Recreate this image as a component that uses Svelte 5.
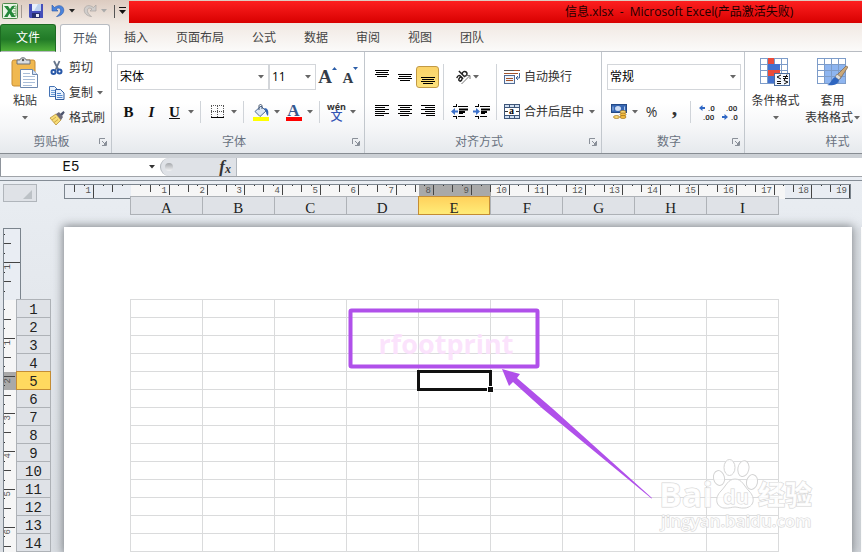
<script>
  const tabs = ['开始', '插入', '页面布局', '公式', '数据', '审阅', '视图', '团队'];
  const cols = ['A', 'B', 'C', 'D', 'E', 'F', 'G', 'H', 'I'];
  const rows = Array.from({ length: 14 }, (_, i) => i + 1);
  let active = $state('开始');
  let fontName = $state('宋体');
  let fontSize = $state('11');
  let format = $state('常规');
  let formula = $state('');
  let cell = $state('E5');

  // one ruler centimetre in pixels
  const CM = 37.8;
  const quarter = (from, to) => {
    const out = [];
    for (let q = from; q <= to; q++) out.push(q);
    return out;
  };
  const hTicks = quarter(-6, 76);
  const vTicks = quarter(-7, 26);
</script>

{#snippet down(color = '#666')}
  <svg class="down" width="6" height="4" viewBox="0 0 6 4" aria-hidden="true"><path d="M0 0h6L3 3.6z" fill={color} /></svg>
{/snippet}

{#snippet drop(label)}
  <button class="drop" aria-label={label}>{@render down()}</button>
{/snippet}

{#snippet lines(list)}
  <svg width="16" height="16" viewBox="0 0 16 16" aria-hidden="true">
    {#each list as [x, y, w]}<rect {x} {y} width={w} height="1" fill="#000" />{/each}
  </svg>
{/snippet}

{#snippet caption(text, launcher)}
  <div class="caption">
    <span>{text}</span>
    {#if launcher}
      <button aria-label={text + '设置'}>
        <svg width="8" height="8" viewBox="0 0 8 8" fill="none" stroke="#8a9099"><path d="M.5 6V.5H6M3 3l3 3M7.5 3v4.500H3M5 6.500h2M6.500 4v2" /></svg>
      </button>
    {/if}
  </div>
{/snippet}

<div class="app">
  <header class="title">
    <div class="quick">
      <svg width="17" height="17" viewBox="0 0 17 17" aria-hidden="true">
        <rect x=".5" y=".5" width="15" height="15" rx="1" fill="#e9f5e6" stroke="#4d8a4c" />
        <path d="M11 3h3v10h-3M11 5.500h3M11 8h3M11 10.500h3" stroke="#75ad72" fill="none" />
        <path d="M2 3h4l2 3 2-3h3L9.500 8l4 6H9.500L7.500 10.500 5.500 14H2l4-6z" fill="#24873a" />
      </svg>
      <i class="bar"></i>
      <button aria-label="保存" class="save">
        <svg width="14" height="14" viewBox="0 0 14 14"><path d="M0 0h14v14H1l-1-1z" fill="#454fba" /><rect x="3" width="9" height="7" fill="#e8f0fb" /><path d="M9 0h3v7H5z" fill="#bdd2ef" /><rect x="3" y="9" width="8" height="5" fill="#263070" /><rect x="7" y="10" width="3" height="3" fill="#e8ecf8" /></svg>
      </button>
      <button aria-label="撤消" class="undo">
        <svg width="14" height="14" viewBox="0 0 14 14"><path d="M1 1v6h6L5 5c3-2 5-.5 4.500 2.500C9 10 7 11.500 5.500 12.500 10 12 12.800 9.500 12.800 6 12.500 1 7 .5 3.500 3.500z" fill="#4a83dc" stroke="#2a58a8" stroke-width=".6" /></svg>
      </button>
      {@render down('#222')}
      <button aria-label="恢复" class="redo">
        <svg width="14" height="14" viewBox="0 0 14 14"><path d="M13 1v6H7l2-2c-3-2-5-.5-4.500 2.500C5 10 7 11.500 8.500 12.500 4 12 1.200 9.500 1.200 6 1.500 1 7 .5 10.500 3.500z" fill="#d0cdcb" stroke="#a9a5a2" stroke-width=".7" /></svg>
      </button>
      {@render down('#aaa')}
      <i class="bar dark"></i>
      <button aria-label="自定义快速访问工具栏" class="custom">
        <svg width="7" height="8" viewBox="0 0 7 8"><path d="M0 .5h7" stroke="#111" /><path d="M0 3h7L3.500 7z" fill="#111" /></svg>
      </button>
    </div>
    <h1>信息.xlsx&nbsp; -&nbsp; Microsoft Excel(产品激活失败)</h1>
  </header>

  <nav class="tabs">
    <button class="file">文件</button>
    {#each tabs as t}
      <button class:on={t === active} onclick={() => (active = t)}>{t}</button>
    {/each}
  </nav>

  <section class="ribbon">
    <div class="group clip">
      <div class="body">
        <button class="paste">
          <svg width="28" height="32" viewBox="0 0 28 32">
            <rect x="1" y="3" width="23" height="26" rx="2" fill="#f0b850" stroke="#c78d32" />
            <path d="M6 3h3c0-3 6-3 6 0h4v4H6z" fill="#d8dde2" stroke="#6d7177" /><circle cx="12" cy="3" r="1.200" fill="#555" />
            <path d="M9.500 12.500h12l5 5v13h-17z" fill="#fff" stroke="#6d87ad" /><path d="M21.500 12.500v5h5" fill="#d5e2f4" stroke="#6d87ad" />
            <path d="M12 16.500h7M12 19.500h12M12 22.500h12M12 25.500h12M12 28.500h9" stroke="#a9bdd8" />
          </svg>
          <span>粘贴</span>
          {@render down()}
        </button>
        <div class="stack">
          <button>
            <svg width="16" height="16" viewBox="0 0 16 16"><path d="M5 1l4.500 9M10.500 1L6.500 10" stroke="#66758c" stroke-width="1.800" /><circle cx="4.500" cy="12" r="2" fill="none" stroke="#2858a8" stroke-width="2" /><circle cx="10.500" cy="11.500" r="2" fill="none" stroke="#2858a8" stroke-width="2" /></svg>
            剪切
          </button>
          <button>
            <svg width="16" height="16" viewBox="0 0 16 16"><path d="M.5 1.500h5l3 3v7h-8z" fill="#e9f2fd" stroke="#4473b5" /><path d="M2 5.500h4M2 7.500h4M2 9.500h4" stroke="#6b9bd6" /><path d="M6.500 4.500h5l3.500 3.500v6.500H6.500z" fill="#e9f2fd" stroke="#315da0" /><path d="M8 8.500h4M8 10.500h5.500M8 12.500h5.500" stroke="#5488ce" /></svg>
            复制 {@render down()}
          </button>
          <button>
            <svg width="16" height="16" viewBox="0 0 16 16"><path d="M1 8l6-4 5 6-5 5z" fill="#f7dd78" stroke="#b6913b" stroke-width=".8" /><path d="M3 10l4-3M5 12.500l4-3" stroke="#d1a846" /><path d="M7 4l3-2 4 5-2 3z" fill="#6d6a78" /><path d="M11 4l3.500-3 1.200 1.500L13 6z" fill="#4b536d" /></svg>
            格式刷
          </button>
        </div>
      </div>
      {@render caption('剪贴板', true)}
    </div>

    <div class="group font">
      <div class="body rows">
        <div class="row">
          <label class="combo name"><select bind:value={fontName} aria-label="字体"><option>宋体</option><option>黑体</option></select>{@render down()}</label>
          <label class="combo size"><select bind:value={fontSize} aria-label="字号"><option>11</option><option>12</option></select>{@render down()}</label>
          <button class="tool grow" aria-label="增大字号"><b>A</b><svg width="5" height="3" viewBox="0 0 5 3"><path d="M0 3h5L2.500 0z" fill="#2b5da8" /></svg></button>
          <button class="tool shrink" aria-label="减小字号"><b>A</b><svg width="5" height="3" viewBox="0 0 5 3"><path d="M0 0h5L2.500 3z" fill="#2b5da8" /></svg></button>
        </div>
        <div class="row">
          <button class="tool serif"><b>B</b></button>
          <button class="tool serif"><b><em>I</em></b></button>
          <button class="tool serif"><b><u>U</u></b></button>
          {@render drop('下划线')}
          <i class="sep"></i>
          <button class="tool" aria-label="边框">
            <svg width="14" height="14" viewBox="0 0 14 14"><path d="M.5 1v11M6.500 1v11M12.500 1v11M0 .5h13M0 6.500h13" stroke="#555" stroke-dasharray="1 1" fill="none" /><path d="M0 12.500h13" stroke="#000" /></svg>
          </button>
          {@render drop('边框')}
          <i class="sep"></i>
          <button class="tool" aria-label="填充颜色">
            <svg width="16" height="17" viewBox="0 0 16 17"><path d="M2 7.500L8 2l5 5-6 5.500z" fill="#dce7f5" stroke="#4d6b97" /><path d="M6 6V2c0-2 3-2 3 0v3" fill="none" stroke="#46566e" /><path d="M11 4c4 0 5 3 4 8-1.500-1-2-3-2-5z" fill="#2f62b3" /><rect y="13" width="16" height="4" fill="#ff0" /></svg>
          </button>
          {@render drop('填充颜色')}
          <button class="tool color" aria-label="字体颜色"><b>A</b><span></span></button>
          {@render drop('字体颜色')}
          <i class="sep"></i>
          <button class="tool wen"><span>wén</span><span class="zi">文</span></button>
          {@render drop('拼音')}
        </div>
      </div>
      {@render caption('字体', true)}
    </div>

    <div class="group align">
      <div class="body cols">
        <div class="rows three">
          <div class="row">
            <button class="tool" aria-label="顶端对齐">{@render lines([[1, 1, 14], [2, 3, 12], [1, 5, 14], [3, 7, 10]])}</button>
            <button class="tool" aria-label="垂直居中">{@render lines([[1, 5, 14], [2, 7, 12], [1, 9, 14], [3, 11, 10]])}</button>
            <button class="tool pressed" aria-label="底端对齐">{@render lines([[1, 8, 14], [2, 10, 12], [1, 12, 14], [3, 14, 10]])}</button>
          </div>
          <div class="row">
            <button class="tool" aria-label="左对齐">{@render lines([[1, 1, 14], [1, 3, 10], [1, 5, 14], [1, 7, 10], [1, 9, 14], [1, 11, 9]])}</button>
            <button class="tool" aria-label="居中">{@render lines([[1, 1, 14], [3, 3, 10], [1, 5, 14], [3, 7, 10], [1, 9, 14], [3, 11, 9]])}</button>
            <button class="tool" aria-label="右对齐">{@render lines([[1, 1, 14], [5, 3, 10], [1, 5, 14], [5, 7, 10], [1, 9, 14], [6, 11, 9]])}</button>
          </div>
        </div>
        <i class="sep tall"></i>
        <div class="rows">
          <div class="row">
            <button class="tool wide" aria-label="方向">
              <svg width="17" height="16" viewBox="0 0 17 16" fill="none"><g transform="rotate(-45 6 7)" stroke="#222" stroke-width="1.500"><path d="M1.500 5.500c3-1.500 4 0 4 1.500v3.500M5.500 7.500c-3-.5-4.500.5-4 2s3 1 4-.5M8 2v8.500M8 6.500c2-1.800 4.500-.5 4.500 1.500S10 11.500 8 9.500" /></g><path d="M6.500 15l8-8M11.500 6.500h3.500v3.500" stroke="#777" /></svg>
              {@render down()}
            </button>
          </div>
          <div class="row">
            <button class="tool" aria-label="减少缩进量">
              <svg width="17" height="16" viewBox="0 0 17 16"><path d="M2 2.500h4M7 2.500h10M2 12.500h4M7 12.500h7M8 9.500h4M5.500 0v3M5.500 13v2" stroke="#000" /><path d="M8 5.500h9M8 8h6" stroke="#000" stroke-width="2" /><path d="M0 7.500L4 4v2.500h3v2H4V11z" fill="#3b70c9" /></svg>
            </button>
            <button class="tool" aria-label="增加缩进量">
              <svg width="17" height="16" viewBox="0 0 17 16"><path d="M2 2.500h4M7 2.500h10M2 12.500h4M7 12.500h7M8 9.500h4M5.500 0v3M5.500 13v2" stroke="#000" /><path d="M8 5.500h9M8 8h6" stroke="#000" stroke-width="2" /><path d="M7 7.500L3 4v2.500H0v2h3V11z" fill="#3b70c9" /></svg>
            </button>
          </div>
        </div>
        <i class="sep tall"></i>
        <div class="rows">
          <div class="row">
            <button class="text">
              <svg width="17" height="16" viewBox="0 0 17 16"><path d="M0 1.500h16M0 4.500h14" stroke="#a2542b" /><path d="M0 1.500h10" stroke="#555" /><rect x=".5" y="6.500" width="10" height="8" fill="#eef3fa" stroke="#516b94" /><path d="M2 9.500h7M2 11.500h7" stroke="#a2542b" /><path d="M15.500 4v5h-3M14 7l-2 2 2 2" fill="none" stroke="#3d6599" /></svg>
              自动换行
            </button>
          </div>
          <div class="row">
            <button class="text">
              <svg width="17" height="16" viewBox="0 0 17 16"><rect x=".5" y=".5" width="15" height="14" fill="#cfdef1" stroke="#3d5578" /><path d="M0 3.500h16M0 11.500h16M5.500 0v3M10.500 0v3M5.500 12v3M10.500 12v3" stroke="#3d5578" /><rect x="1" y="4" width="14" height="7" fill="#fff" /><path d="M1 7.500h3M12 7.500h3" stroke="#333" /><text x="5" y="10" font-family="Liberation Serif" font-weight="700" font-size="10">a</text></svg>
              合并后居中 {@render down()}
            </button>
          </div>
        </div>
      </div>
      {@render caption('对齐方式', true)}
    </div>

    <div class="group number">
      <div class="body rows">
        <div class="row">
          <label class="combo fmt"><select bind:value={format} aria-label="数字格式"><option>常规</option><option>数值</option></select>{@render down()}</label>
        </div>
        <div class="row">
          <button class="tool" aria-label="会计数字格式">
            <svg width="16" height="16" viewBox="0 0 16 16"><rect x=".5" y=".5" width="15" height="8" fill="#3767b3" stroke="#244a87" /><ellipse cx="7" cy="4.500" rx="3" ry="2.500" fill="#cdddf4" /><path d="M2 2.500v4M13.500 2.500v4" stroke="#a9c4ea" /><ellipse cx="12" cy="8" rx="3" ry="1.500" fill="#fad874" stroke="#a17019" stroke-width=".7" /><ellipse cx="12" cy="10.500" rx="3" ry="1.500" fill="#f5bd3f" stroke="#a17019" stroke-width=".7" /><ellipse cx="12" cy="13" rx="3" ry="1.500" fill="#f5bd3f" stroke="#a17019" stroke-width=".7" /><ellipse cx="5.500" cy="13" rx="3" ry="1.500" fill="#fad874" stroke="#a17019" stroke-width=".7" /></svg>
          </button>
          {@render drop('会计数字格式')}
          <button class="tool pct">%</button>
          <button class="tool comma">,</button>
          <i class="sep"></i>
          <button class="tool dec" aria-label="增加小数位数">
            <svg width="17" height="18" viewBox="0 0 17 18" font-family="Roboto" font-size="8" font-weight="500" fill="#222"><path d="M0 5l3.500-3v2H6v2H3.500v2z" fill="#2f67c4" /><text x="9" y="8">.0</text><text x="4" y="17">.00</text></svg>
          </button>
          <button class="tool dec" aria-label="减少小数位数">
            <svg width="17" height="18" viewBox="0 0 17 18" font-family="Roboto" font-size="8" font-weight="500" fill="#222"><path d="M6 14l-3.500-3v2H0v2h2.500v2z" fill="#2f67c4" /><text x="4" y="8">.00</text><text x="9" y="17">.0</text></svg>
          </button>
        </div>
      </div>
      {@render caption('数字', true)}
    </div>

    <div class="group style">
      <div class="body">
        <button class="large">
          <svg width="31" height="30" viewBox="0 0 31 30"><rect x=".5" y=".5" width="27" height="25" fill="#fff" stroke="#7d9cc9" /><path d="M0 6.500h28M0 12.500h28M0 18.500h28M7.500 0v26M14.500 0v26M21.500 0v26" stroke="#7d9cc9" /><path d="M8 0h6v6H8zM8 12h12v6H8z" fill="#ea4b3a" /><path d="M8 6h12v6H8zM8 18h6v7H8z" fill="#4372cf" /><rect x="14.500" y="15.500" width="15" height="12" fill="#f4f8fe" stroke="#4b6c9c" /><path d="M21 17l-4 2 4 2M17 23.500h4M17 25.500h4M23 18.500h5M23 20.500h5M27 16.500l-3 6M24 22.500l4 1.500-4 2" stroke="#111" fill="none" /></svg>
          <span>条件格式</span>
          {@render down()}
        </button>
        <button class="large">
          <svg width="31" height="30" viewBox="0 0 31 30"><rect x=".5" y=".5" width="28" height="25" fill="#fff" stroke="#7d9cc9" /><rect x="8" y="7" width="20" height="18" fill="#8eb5f0" /><path d="M0 6.500h29M0 12.500h29M0 18.500h29M7.500 0v26M14.500 0v26M21.500 0v26" stroke="#7d9cc9" /><path d="M29 8l2 1-8 12-4-3z" fill="#caa879" stroke="#70583c" stroke-width=".6" /><path d="M20 16l4 3-2 3-4-3z" fill="#ddd" stroke="#666" stroke-width=".6" /><path d="M18 19l4 3c-1 5-7 6-12 5 4-1 4-6 8-8z" fill="#2e66c0" /></svg>
          <span>套用</span>
          <span class="with">表格格式 {@render down()}</span>
        </button>
      </div>
      {@render caption('样式', false)}
    </div>
  </section>

  <section class="formula">
    <label class="namebox"><input bind:value={cell} aria-label="名称框" />{@render down('#333')}</label>
    <div class="fx"><span class="knob"></span><button aria-label="插入函数"><i>f</i><i class="x">x</i></button></div>
    <input class="entry" bind:value={formula} aria-label="编辑栏" />
  </section>

  <main class="work">
    <div class="corner"><button aria-label="全选"><svg width="9" height="9" viewBox="0 0 9 9"><path d="M9 0v9H0z" fill="#bcc1c6" /></svg></button></div>

    <div class="top">
      <svg class="hruler" width="788" height="15" viewBox="64 184 788 15" aria-hidden="true">
        <rect x="64.500" y="184.500" width="786" height="14" fill="#e9edf3" stroke="#7b848d" />
        <rect x="131" y="185" width="654" height="14" fill="#f6f6f6" />
        <rect x="419" y="185" width="72" height="14" fill="#a9a9a9" />
        {#each hTicks as q}
          {@const x = Math.round(131 + (q * CM) / 4)}
          {#if q % 4 === 0}
            {#if q !== 0}
              <rect {x} y="185" width="1" height={q < 0 || q > 70 ? 13 : 10} fill="#444" />
              <text x={x - 2} y="193" text-anchor="end">{Math.abs(q / 4)}</text>
            {/if}
          {:else if q % 2 === 0}
            <rect {x} y="185" width="1" height="7" fill="#444" />
          {:else}
            <rect {x} y="185" width="1" height="1" fill="#333" />
          {/if}
        {/each}
      </svg>
      <div class="heads">
        {#each cols as c}<div class:sel={c === 'E'}>{c}</div>{/each}
      </div>
    </div>

    <div class="side">
      <svg class="vruler" width="13" height="325" viewBox="3 228 13 325" aria-hidden="true">
        <rect x="3.500" y="228.500" width="17" height="340" fill="#e9edf3" stroke="#7b848d" />
        <rect x="4" y="300" width="17" height="260" fill="#f6f6f6" />
        <rect x="4" y="372" width="17" height="18" fill="#a9a9a9" />
        {#each vTicks as q}
          {@const y = Math.round(300 + (q * CM) / 4)}
          {#if q % 4 === 0}
            {#if q !== 0}
              <rect x="4" {y} width={q < 0 ? 16 : 11} height="1" fill="#444" />
              <text transform="translate(10 {y + 2}) rotate(-90)" text-anchor="end">{Math.abs(q / 4)}</text>
            {/if}
          {:else if q % 2 === 0}
            <rect x="4" {y} width="7" height="1" fill="#444" />
          {:else}
            <rect x="4" {y} width="1" height="1" fill="#333" />
          {/if}
        {/each}
      </svg>
      <div class="nums">
        {#each rows as r}<div class:sel={r === 5}>{r}</div>{/each}
      </div>
    </div>

    <div class="pages">
      <div class="page">
        <table>
          <tbody>
            {#each rows as r}
              <tr>{#each cols as c}<td>{#if c === 'E' && r === 5}<span class="cursor"></span>{/if}</td>{/each}</tr>
            {/each}
          </tbody>
        </table>
        <svg class="marks" width="788" height="325" viewBox="64 227 788 325">
          <text x="446" y="354" text-anchor="middle" font-family="Open Sans" font-weight="700" font-size="27" fill="#fbdffc" fill-opacity=".9">rfootprint</text>
          <rect x="350.500" y="310.500" width="187" height="56" rx="1" fill="none" stroke="#b050ea" stroke-width="4" />
          <path d="M502 369l18 5-3 4 36 31 99 89-.5.5L543 409l-30-27-4 4z" fill="#b050ea" />
          <g class="mark" fill="#fff" fill-opacity=".8" stroke="#d4d4d4" stroke-width="1">
            <ellipse cx="719" cy="478" rx="5.500" ry="7.500" transform="rotate(-12 719 478)" />
            <ellipse cx="729.500" cy="467.500" rx="5.500" ry="8" />
            <ellipse cx="743.500" cy="468.500" rx="5.500" ry="8" transform="rotate(12 743 468)" />
            <ellipse cx="752" cy="482" rx="5.500" ry="7.500" transform="rotate(12 752 482)" />
            <path d="M735 479c7 0 9 7 14 12 7 7 5 16-4 17-5 .5-7-1-10-1s-6 1.500-11 1c-8-1-10-10-3-17 5-5 7-12 14-12z" />
            <text x="659" y="507" font-family="Open Sans" font-weight="700" font-size="34">Bai</text>
            <text x="723" y="504" font-family="Open Sans" font-weight="700" font-size="20">du</text>
            <text x="758" y="505" font-family="Noto Sans CJK SC" font-weight="900" font-size="27">经验</text>
            <text x="661" y="527" font-family="Open Sans" font-weight="600" font-size="17">jingyan.baidu.com</text>
          </g>
        </svg>
      </div>
      <div class="next"></div>
    </div>
  </main>
</div>

<style>
  :global(body) { margin: 0; }
  .app {
    height: 100vh;
    overflow: hidden;
    display: flex;
    flex-direction: column;
    font: 12px/16px 'Open Sans', 'Noto Sans CJK SC', sans-serif;
    color: #333;
    background: linear-gradient(#dccbc0, #f1e9e3 24px, #fbfaf9 50px);
  }
  svg { display: block; flex: none; }
  button {
    border: 0;
    padding: 0;
    margin: 0;
    background: none;
    font: inherit;
    color: inherit;
    display: flex;
    align-items: center;
    justify-content: center;
    flex: none;
    white-space: nowrap;
  }
  input, select { font: inherit; color: inherit; border: 0; padding: 0; margin: 0; outline: 0; background: transparent; min-width: 0; }

  .title { display: flex; height: 24px; flex: none; }
  .quick { width: 127px; padding-left: 2px; display: flex; align-items: center; flex: none; padding-bottom: 2px; height: 22px; }
  .bar { width: 1px; height: 13px; background: #a49a94; margin: 0 7px 0 2px; }
  .bar.dark { background: #555; margin: 0 4px 0 7px; }
  .undo { margin: 0 4px 0 8px; }
  .redo { margin: 0 4px 0 8px; }
  h1 {
    margin: 1px 0 0;
    flex: 1;
    height: 22px;
    padding-left: 436px;
    background: linear-gradient(#fd2020, #d80000);
    color: #200;
    font: inherit;
    line-height: 22px;
    white-space: nowrap;
    overflow: hidden;
  }

  .tabs { display: flex; height: 28px; flex: none; }
  .tabs button { padding: 0 14px; color: #444; border: 1px solid transparent; border-width: 0 0 1px; border-bottom-color: #b8bcc2; }
  .tabs::after { content: ''; flex: 1; border-bottom: 1px solid #b8bcc2; }
  .tabs .file { width: 56px; margin-right: 4px; border: 1px solid #1d6b22; border-bottom-color: #b8bcc2; border-radius: 3px 3px 0 0; background: linear-gradient(#35913a, #217a27 55%, #4fb039); color: #fff; }
  .tabs .on { padding: 0 12px; border: 1px solid #b8bcc2; border-bottom: 0; border-radius: 3px 3px 0 0; background: #fff; color: #4a5360; }

  .ribbon { display: flex; height: 101px; flex: none; background: linear-gradient(#fff 50%, #f5f6f8 75%, #e6e9ed); overflow: hidden; border-bottom: 1px solid #878c92; }
  .group { flex: none; display: flex; flex-direction: column; border-right: 1px solid #c2c7cd; box-sizing: border-box; }
  .clip { width: 112px; }
  .font { width: 253px; }
  .align { width: 237px; }
  .number { width: 143px; }
  .style { width: 190px; }
  .body { height: 80px; display: flex; box-sizing: border-box; padding-left: 5px; }
  .style .body { padding-left: 2px; }
  .cols { align-items: flex-start; }
  .rows { display: flex; flex-direction: column; gap: 10px; padding-top: 12px; }
  .body.rows { padding-left: 5px; }
  .row { display: flex; align-items: center; height: 26px; }
  .body.rows .row + .row, .cols .row + .row { height: 24px; }
  .caption { display: flex; height: 20px; align-items: center; color: #69727f; padding-right: 4px; }
  .caption span { flex: 1; text-align: center; padding-left: 4px; }
  .style .caption span { padding-left: 0; }

  .paste { flex-direction: column; width: 40px; gap: 4px; justify-content: flex-start; padding-top: 5px; }
  .paste :global(.down) { margin-top: 3px; }
  .stack { display: flex; flex-direction: column; padding: 3px 0 0 4px; }
  .stack button { height: 25px; gap: 4px; justify-content: flex-start; }
  .stack :global(.down) { margin-left: 0; }

  .combo { display: flex; align-items: center; box-sizing: border-box; height: 26px; border: 1px solid #d3d6da; background: #fff; padding: 0 4px 0 2px; color: #000; flex: none; }
  .combo select { flex: 1; appearance: none; height: 22px; }
  .name { width: 152px; }
  .size { width: 47px; }
  .fmt { width: 134px; }
  .tool { width: 23px; height: 22px; }
  .drop { width: 10px; height: 22px; }
  .sep { width: 1px; height: 22px; margin: 0 5px 0 4px; background: #d0d4d9; flex: none; }
  .sep.tall { height: 56px; margin: 12px 4px 0; }
  .serif { font: 15px/18px 'Liberation Serif', serif; color: #111; }
  .grow, .shrink { align-items: flex-start; font: 19px/22px 'Liberation Serif', serif; color: #333c48; }
  .shrink { font-size: 15px; line-height: 25px; }
  .grow svg, .shrink svg { margin-top: 1px; }
  .color { flex-direction: column; font: 17px/13px 'Liberation Serif', serif; color: #36588f; }
  .color span { width: 16px; height: 4px; background: #f00; }
  .wen { flex-direction: column; font-size: 9px; line-height: 9px; font-weight: 700; }
  .zi { color: #3355b5; font-size: 12px; line-height: 12px; font-weight: 500; }
  .pressed { box-sizing: border-box; background: linear-gradient(#fbd368, #fde27c); border: 1px solid #c29a45; border-radius: 3px; }
  .cols .rows .tool { width: 22px; }
  .cols .three .tool { width: 23px; }
  .cols .rows .wide { width: 38px; gap: 1px; }
  .text { gap: 3px; padding-left: 3px; }
  .text :global(.down) { margin-left: 2px; }
  .pct { font-size: 14px; }
  .comma { font: 700 22px/12px 'Liberation Serif', serif; padding-bottom: 8px; }

  .large { width: 57px; flex-direction: column; justify-content: flex-start; padding-top: 6px; }
  .large span { margin-top: 5px; }
  .large :global(.down) { margin-top: 7px; }
  .large .with { display: flex; align-items: center; gap: 1px; margin: 1px 0 0; }
  .large .with :global(.down) { margin-top: 0; }

  .formula { display: flex; flex: none; height: 18px; border-top: 4px solid #ccd0d5; border-bottom: 1px solid #a0a4a9; background: #fff; box-shadow: 0 3px #e8ecf2, 0 4px #858d96; margin-bottom: 4px; }
  .namebox { width: 155px; display: flex; align-items: center; border-left: 1px solid #8e949c; box-sizing: border-box; }
  .namebox input { flex: 1; text-align: center; font: 14px/18px 'Liberation Mono', monospace; color: #111; padding-right: 8px; }
  .fx { width: 77px; margin-left: 5px; display: flex; box-sizing: border-box; justify-content: space-between; align-items: center; background: #dfe2e7; border: 1px solid #b2b7bd; border-width: 0 1px; border-radius: 10px 0 0 10px; padding: 0 5px 0 4px; }
  .knob { width: 8px; height: 8px; border-radius: 50%; background: linear-gradient(#a5a8ac, #f2f3f5); }
  .fx button { font: 700 17px/16px 'Liberation Serif', serif; }
  .fx .x { font-size: 12px; padding-top: 3px; }
  .entry { flex: 1; }

  .work { flex: 1; display: grid; grid-template-columns: 64px 1fr; grid-template-rows: 46px 1fr; background: linear-gradient(#e9edf2, #d9dde2); overflow: hidden; min-height: 0; }
  .corner { padding: 3px 0 0 3px; }
  .corner button { width: 34px; height: 18px; box-sizing: border-box; border: 1px solid #b0b5bb; background: #dfe2e7; justify-content: flex-end; padding: 2px 4px 0 0; }
  .top { padding-top: 3px; }
  .hruler text, .vruler text { font: 9px 'Liberation Mono', monospace; fill: #555; }
  .heads { display: flex; margin: -3px 0 0 66px; width: 649px; position: relative; }
  .heads div { box-sizing: border-box; flex: 1; height: 19px; border: 1px solid #aeb2b7; border-right-width: 0; background: #dfe2e7; text-align: center; font: 15px/22px 'Liberation Serif', serif; color: #222; }
  .heads div:last-child { border-right-width: 1px; }
  .heads .sel, .nums .sel { background: linear-gradient(#ffd15c, #ffec78); border: 1px solid #c48d35; }
  .side { display: flex; padding: 1px 0 0 3px; }
  .vruler { overflow: visible; }
  .nums { width: 35px; margin-top: 71px; position: relative; }
  .nums div { box-sizing: border-box; height: 19px; margin-bottom: -1px; border: 1px solid #aeb2b7; background: #dfe2e7; text-align: center; font: 14px/20px 'Liberation Mono', monospace; color: #222; }
  .nums .sel { position: relative; background: #ffd95f; }
  .pages { display: flex; gap: 9px; min-width: 0; }
  .page { position: relative; flex: 1; background: #fff; padding: 72px 0 0 66px; box-shadow: 0 0 9px 1px rgb(70 75 80 / 65%); }
  .next { width: 1px; background: #fff; box-shadow: 0 0 7px rgb(90 95 100 / 60%); }
  table { border-collapse: collapse; table-layout: fixed; width: 649px; }
  td { box-sizing: border-box; height: 18px; padding: 0; border: 1px solid #dadbdc; position: relative; }
  .cursor { position: absolute; inset: -2px; border: 3px solid #111; }
  .cursor::after { content: ''; position: absolute; right: -5px; bottom: -5px; width: 5px; height: 5px; background: #111; border: 1px solid #fff; }
  .marks { position: absolute; left: 0; top: 0; }
  .mark text { paint-order: stroke; }
</style>
